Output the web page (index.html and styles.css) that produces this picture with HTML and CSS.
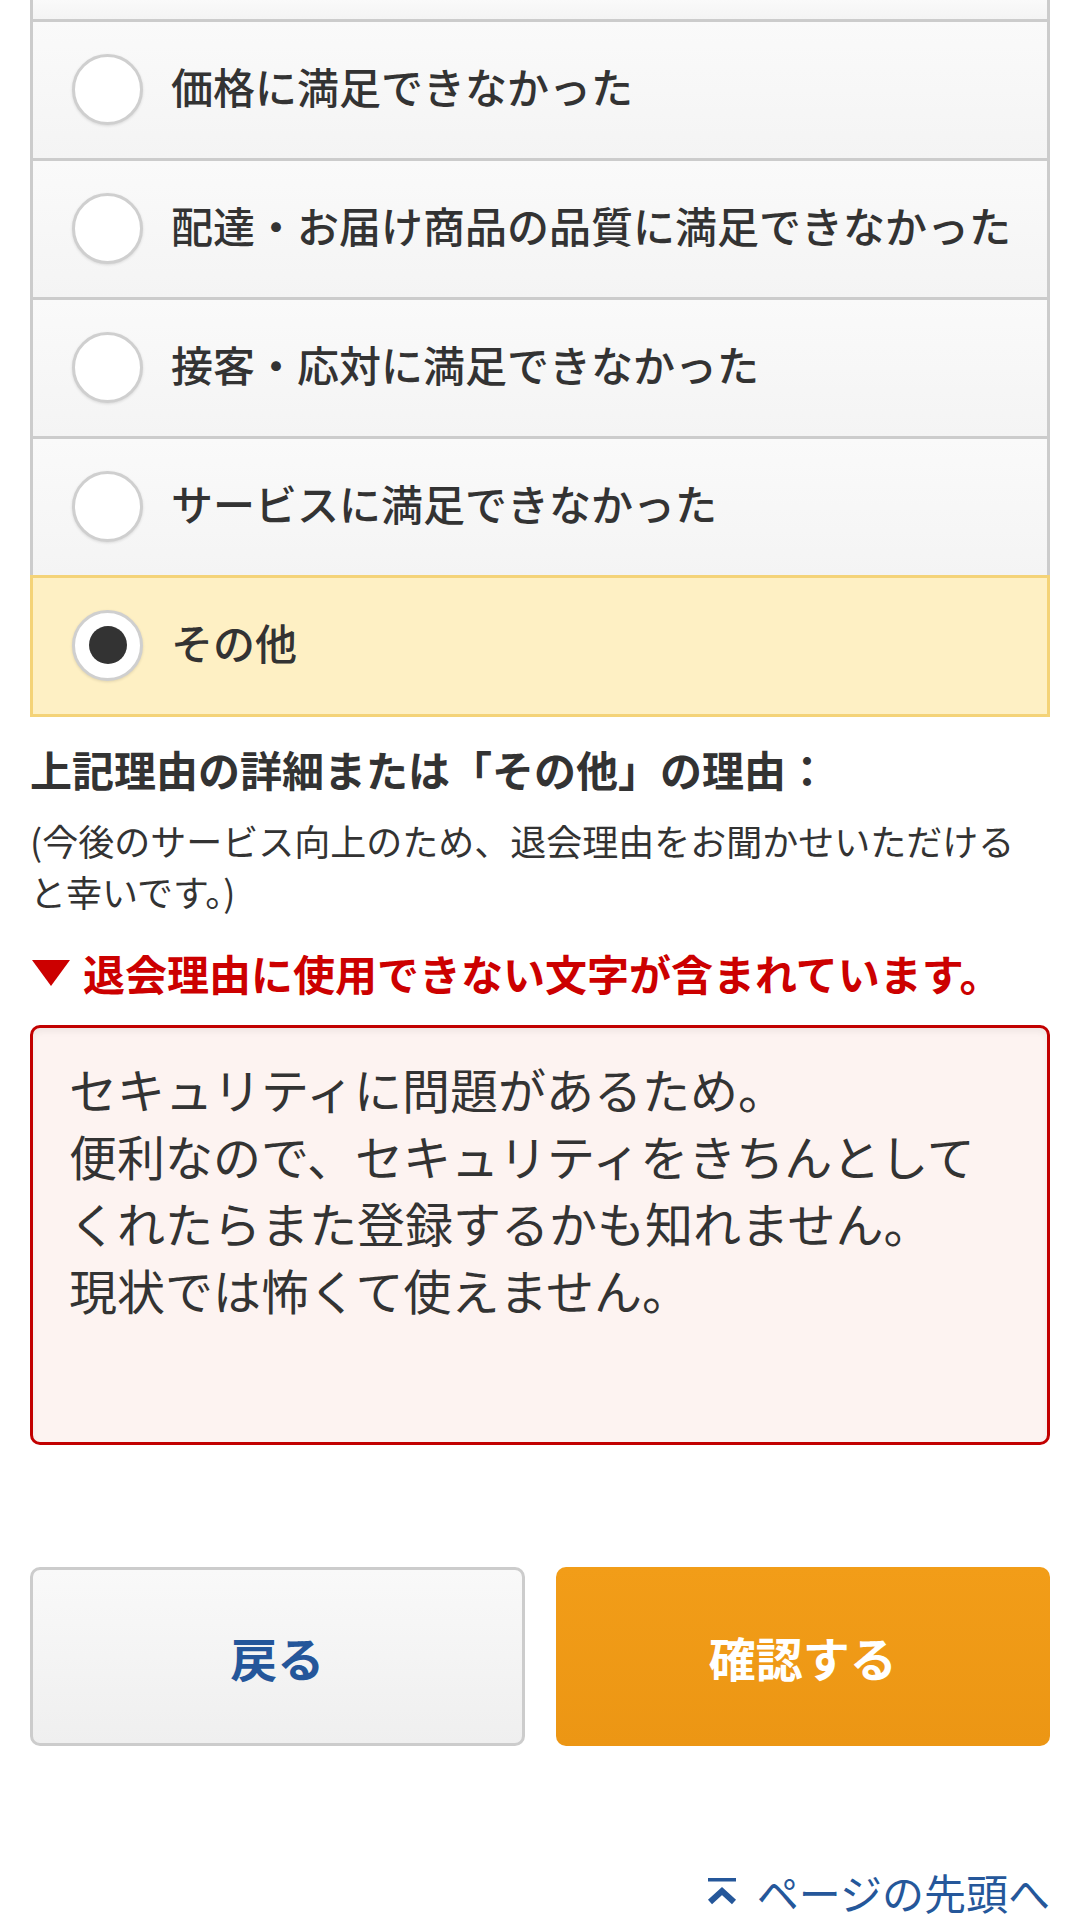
FILE: index.html
```html
<!DOCTYPE html>
<html lang="ja">
<head>
    <meta charset="UTF-8">
    <meta name="viewport" content="width=device-width, initial-scale=1.0">
    <title>退会理由</title>
    <link rel="stylesheet" href="styles.css">
</head>
<body>
    <div class="page">
        <div class="choices">
            <div class="choice choice-cut"></div>
            <label class="choice"><span class="radio"></span><span class="choice-text">価格に満足できなかった</span></label>
            <label class="choice"><span class="radio"></span><span class="choice-text">配達・お届け商品の品質に満足できなかった</span></label>
            <label class="choice"><span class="radio"></span><span class="choice-text">接客・応対に満足できなかった</span></label>
            <label class="choice"><span class="radio"></span><span class="choice-text">サービスに満足できなかった</span></label>
            <label class="choice selected"><span class="radio checked"></span><span class="choice-text">その他</span></label>
        </div>

        <h2 class="detail-title">上記理由の詳細または「その他」の理由：</h2>
        <p class="detail-note">(今後のサービス向上のため、退会理由をお聞かせいただけると幸いです。)</p>

        <p class="error">
            <svg class="error-mark" width="38" height="26" viewBox="0 0 38 26"><polygon points="0,0 38,0 19,26" fill="#cc0000"/></svg>
            退会理由に使用できない文字が含まれています。
        </p>

        <textarea class="reason">セキュリティに問題があるため。
便利なので、セキュリティをきちんとして
くれたらまた登録するかも知れません。
現状では怖くて使えません。</textarea>

        <div class="actions">
            <button class="btn btn-back">戻る</button>
            <button class="btn btn-confirm">確認する</button>
        </div>

        <div class="pagetop">
            <a href="#" class="pagetop-link">
                <svg width="30" height="28" viewBox="0 0 30 28">
                    <rect x="1" y="0" width="28" height="3.5" fill="#25579a"/>
                    <polyline points="3,24 15,13 27,24" fill="none" stroke="#25579a" stroke-width="6"/>
                </svg>
                ページの先頭へ
            </a>
        </div>
    </div>
</body>
</html>
```

FILE: styles.css
```css
body {
    margin: 0;
    background: #fff;
    color: #333;
    font-family: "Noto Sans CJK JP", "Noto Sans", sans-serif;
}
.page {
    padding: 0 30px;
}
.choices {
    display: flex;
    flex-direction: column;
}
.choice {
    display: flex;
    align-items: center;
    height: 136px;
    padding-left: 39px;
    border: 3px solid #cccccc;
    margin-top: -3px;
    background: linear-gradient(#fafafa, #f4f4f4);
}
.choice-cut {
    height: 19px;
    margin-top: 0;
    border-top: none;
}
.choice.selected {
    position: relative;
    background: #fef0c4;
    border-color: #f4d378;
}
.radio {
    box-sizing: border-box;
    width: 71px;
    height: 71px;
    margin-bottom: 2px;
    border: 3px solid #cfcfcf;
    border-radius: 50%;
    background: #fff;
    box-shadow: 0 1px 3px rgba(0, 0, 0, 0.12);
    display: flex;
    align-items: center;
    justify-content: center;
    flex-shrink: 0;
}
.radio.checked::after {
    content: "";
    width: 38px;
    height: 38px;
    border-radius: 50%;
    background: #333;
}
.choice-text {
    margin-left: 28px;
    padding-bottom: 8px;
    font-size: 42px;
    font-weight: 500;
    line-height: 1.3;
}
.detail-title {
    margin: 24px 0 0;
    font-size: 42px;
    font-weight: 700;
    line-height: 55px;
}
.detail-note {
    margin: 19px 0 0;
    font-size: 36px;
    line-height: 51px;
}
.error {
    display: flex;
    align-items: center;
    margin: 28px 0 0;
    color: #cc0000;
    font-size: 42px;
    font-weight: 700;
    line-height: 56px;
}
.error-mark {
    margin: 0 13px 0 2px;
}
.reason {
    display: block;
    box-sizing: border-box;
    width: 100%;
    height: 420px;
    margin-top: 24px;
    padding: 27px 36px;
    border: 3px solid #c20000;
    border-radius: 10px;
    background: #fdf3f1;
    box-shadow: inset 0 4px 6px rgba(0, 0, 0, 0.05);
    color: #333;
    font-family: "Noto Sans CJK JP", "Noto Sans", sans-serif;
    font-size: 48px;
    line-height: 67px;
    resize: none;
    overflow: hidden;
}
.actions {
    display: grid;
    grid-template-columns: 1fr 1fr;
    gap: 31px;
    margin-top: 122px;
}
.btn {
    height: 179px;
    border-radius: 10px;
    font-family: "Noto Sans CJK JP", "Noto Sans", sans-serif;
    font-size: 47px;
    font-weight: 700;
}
.btn-back {
    border: 3px solid #cccccc;
    background: linear-gradient(#f9f9f9, #efefef);
    color: #24569a;
}
.btn-confirm {
    border: none;
    background: linear-gradient(#f29d18, #ec9614);
    color: #fff;
}
.pagetop {
    display: flex;
    justify-content: flex-end;
    margin-top: 118px;
}
.pagetop-link {
    display: flex;
    align-items: center;
    gap: 20px;
    color: #25579a;
    font-size: 42px;
    line-height: 56px;
    text-decoration: none;
}
```
